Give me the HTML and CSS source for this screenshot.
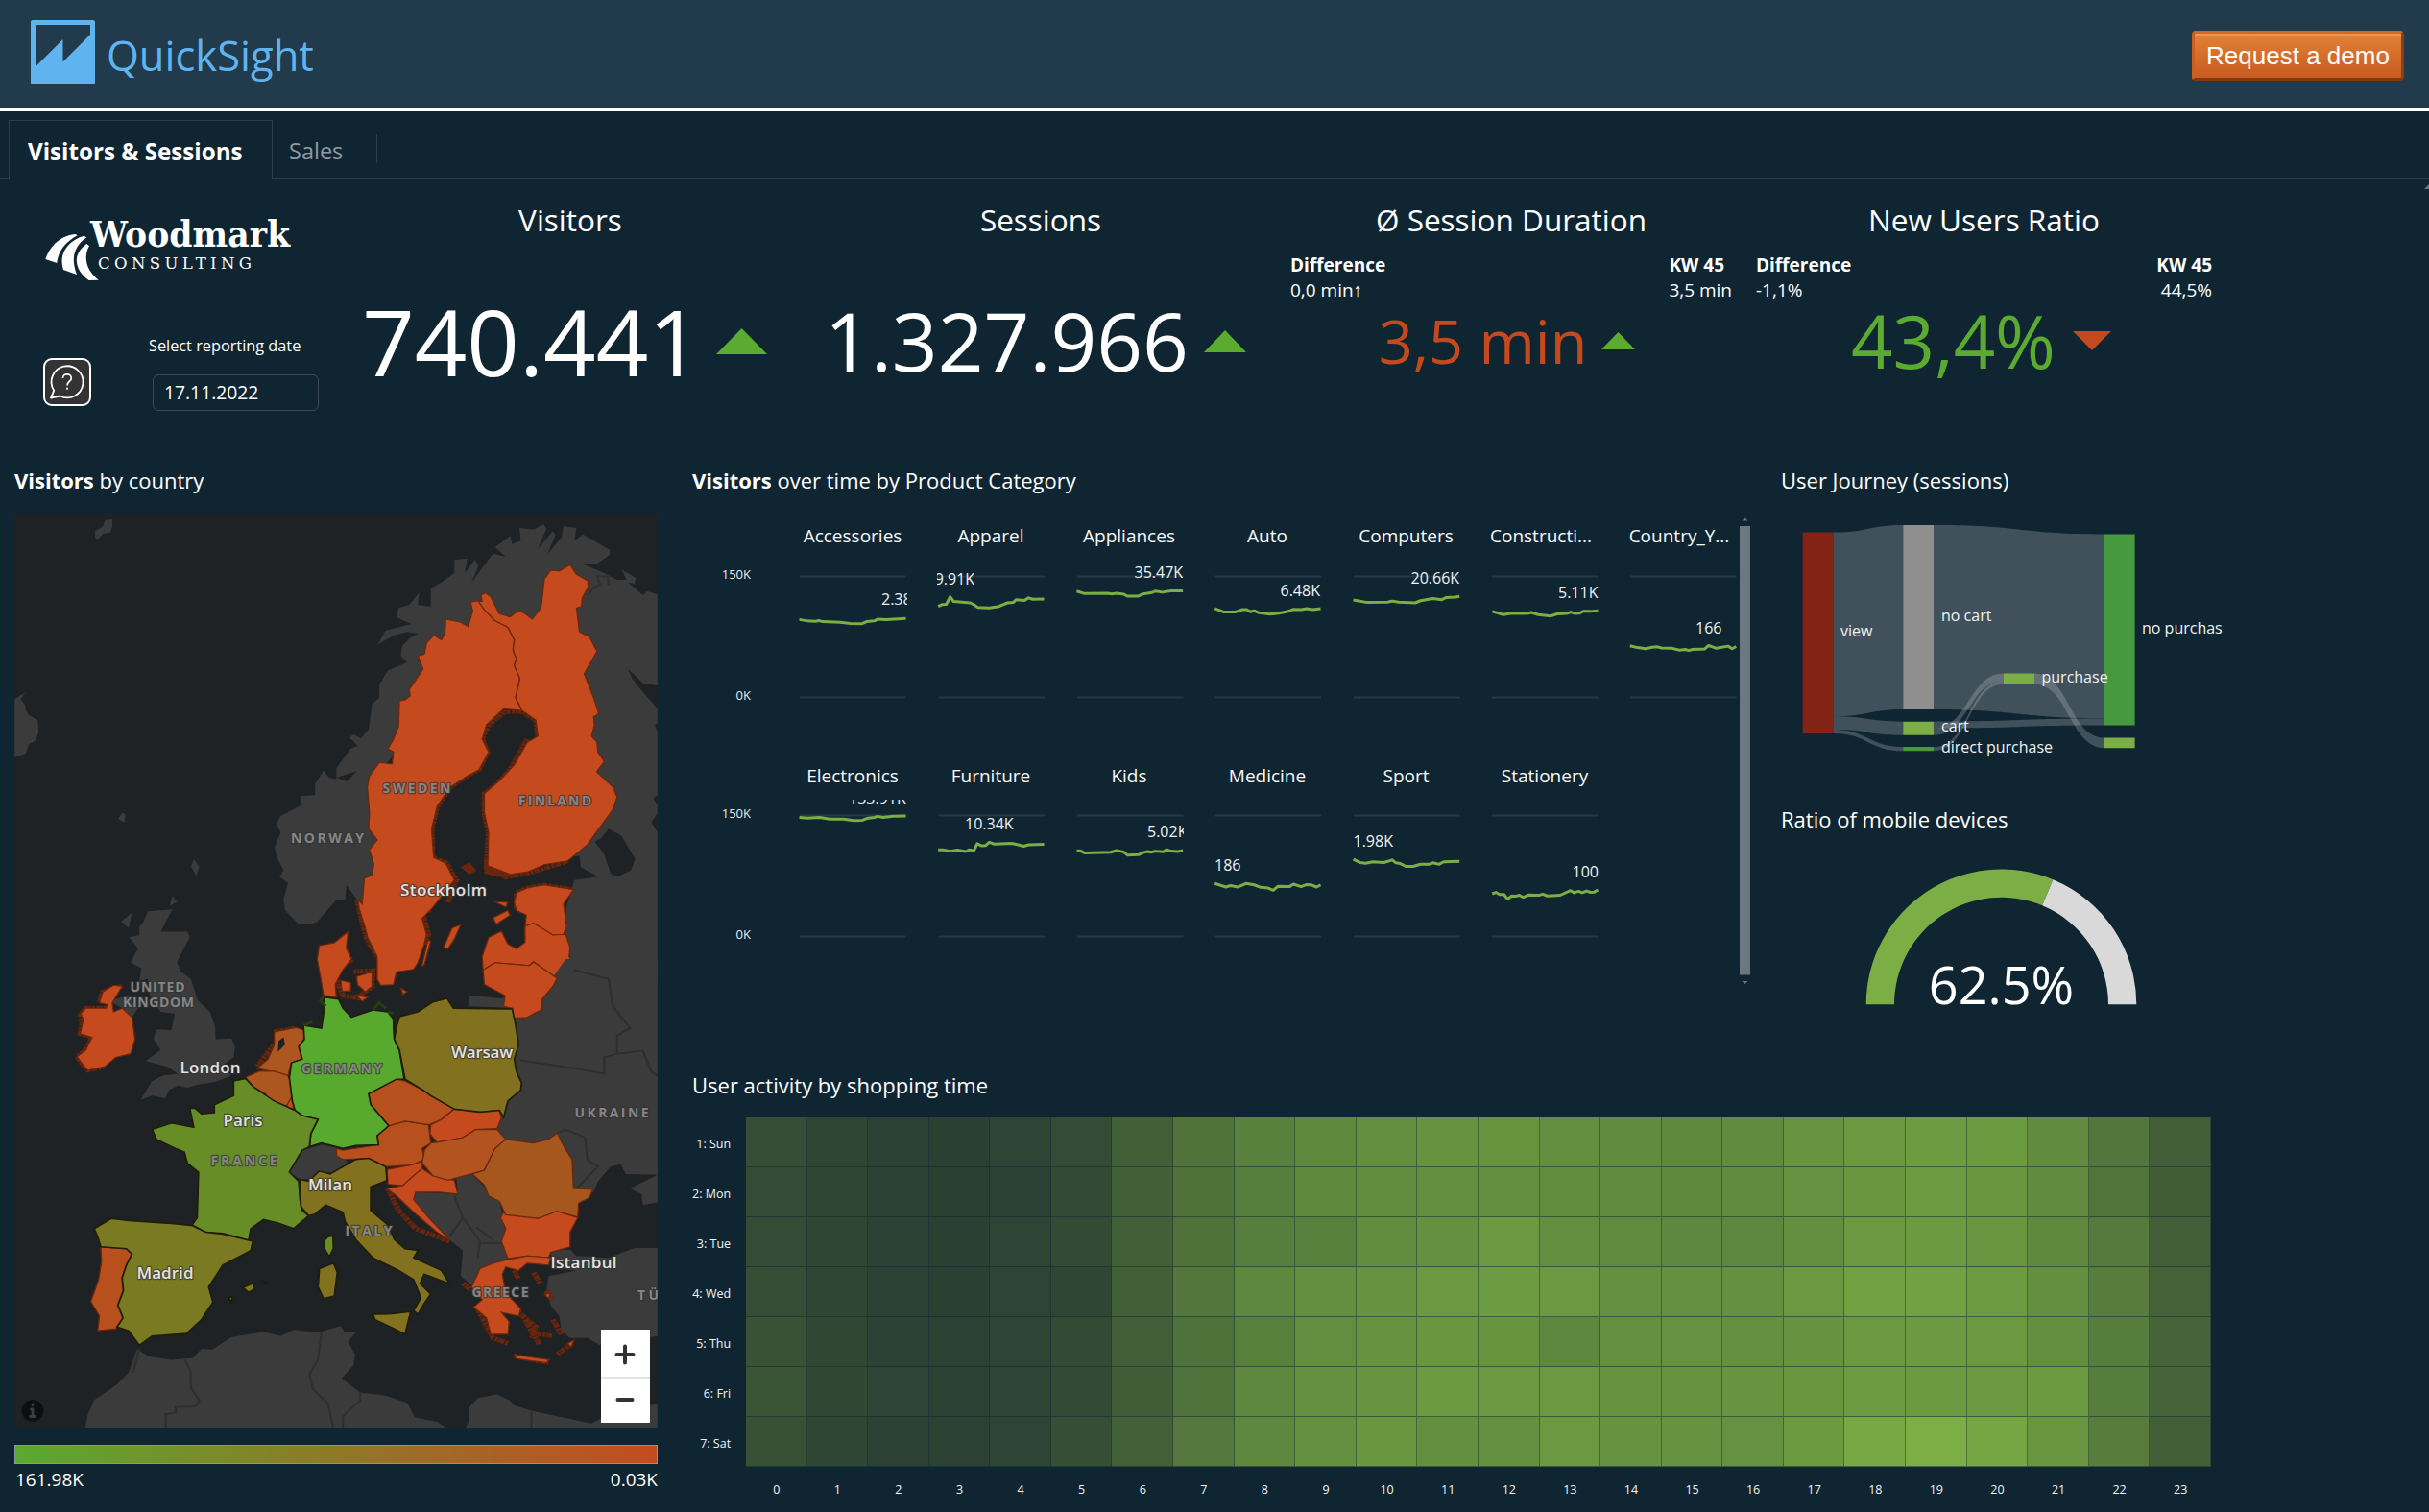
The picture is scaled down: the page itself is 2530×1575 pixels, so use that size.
FILE: index.html
```html
<!DOCTYPE html>
<html lang="en">
<head>
<meta charset="utf-8">
<title>QuickSight – Visitors &amp; Sessions</title>
<link rel="stylesheet" href="styles.css">
</head>
<body>
<header class="topbar">
  <div class="brand">
    <svg class="brand-mark" viewBox="0 0 67 67"><rect width="67" height="67" rx="2" fill="#5fb4f0"/><path d="M5 5H62V15L33.500 43.500V20L5 48.500Z" fill="#213a4c"/></svg>
    <span class="brand-name">QuickSight</span>
  </div>
  <button class="demo-button">Request a demo</button>
</header>
<nav class="tabs">
  <div class="tab tab-active">Visitors &amp; Sessions</div>
  <div class="tab">Sales</div>
  <i class="tab-divider"></i>
  <svg class="page-scroll" viewBox="0 0 5 5"><path d="M0 5L5 0V5Z" fill="#6a7880"/></svg>
</nav>

<section class="kpis">
  <div class="intro">
    <svg class="woodmark" viewBox="45 222 282 74">
      <g transform="translate(30 210) scale(.3333)" fill="#fff">
        <path d="M52 180C66 138 100 106 145 102L152 106C116 126 92 152 88 192Z"/>
        <path d="M172 107L181 112C146 136 128 170 150 228L108 213C92 164 122 122 172 107Z"/>
        <path d="M181 132L189 139C170 172 178 214 218 245L188 246C140 212 136 164 181 132Z"/>
      </g>
      <text x="94" y="257" class="wm-name" textLength="208" lengthAdjust="spacingAndGlyphs">Woodmark</text>
      <text x="102" y="279.500" class="wm-sub" textLength="160">CONSULTING</text>
    </svg>
    <div class="controls">
      <div class="help">
        <svg viewBox="0 0 46 46" fill="none" stroke="#fff" stroke-width="1.800" stroke-linejoin="round"><path d="M9.200 31.800A16.500 16.500 0 1 1 15.500 37.500L6 39.500Z"/><path d="M18.500 19C18.500 13.500 27.300 13.500 27.300 19C27.300 22.300 23 22.300 23 26.500M23 28.800V30.800" stroke-width="1.700"/></svg>
      </div>
      <div class="date">
        <label class="date-label">Select reporting date</label>
        <div class="date-input">17.11.2022</div>
      </div>
    </div>
  </div>
  <div class="kpi">
    <h2>Visitors</h2><div class="deltas"></div>
    <div class="value v1"><span>740.441</span><svg width="53" height="27" viewBox="0 0 53 27"><path d="M26.500 0L53 27H0Z" fill="#5aab2f"/></svg></div>
  </div>
  <div class="kpi">
    <h2>Sessions</h2><div class="deltas"></div>
    <div class="value v2"><span>1.327.966</span><svg width="44" height="23" viewBox="0 0 44 23"><path d="M22 0L44 23H0Z" fill="#5aab2f"/></svg></div>
  </div>
  <div class="kpi">
    <h2>Ø Session Duration</h2>
    <div class="deltas d3"><div><b>Difference</b><br>0,0 min↑</div><div><b>KW 45</b><br>3,5 min</div></div>
    <div class="value v3 bad"><span>3,5 min</span><svg width="35" height="18" viewBox="0 0 35 18"><path d="M17.500 0L35 18H0Z" fill="#5aab2f"/></svg></div>
  </div>
  <div class="kpi kpi-last">
    <h2>New Users Ratio</h2>
    <div class="deltas d4"><div><b>Difference</b><br>-1,1%</div><div class="right"><b>KW 45</b><br>44,5%</div></div>
    <div class="value v4 good"><span>43,4%</span><svg width="40" height="20" viewBox="0 0 40 20"><path d="M0 0H40L20 20Z" fill="#c44a1e"/></svg></div>
  </div>
</section>

<main class="panels">
  <section class="map-panel">
    <h3><b>Visitors</b> by country</h3>
    <div class="map">
      <svg viewBox="15 535 670 953" width="670" height="953">
        <rect x="15" y="535" width="670" height="953" fill="#1e2225"/>
        <g transform="translate(0 480) scale(.44643 .33333)">
          <g class="land">
            <path d="M262 183L245 185 240 205 222 220 222 240 228 245 240 228 257 225 262 205Z"/>
            <path d="M34 745L60 723 48 745 58 762 60 780 68 795 88 810 90 850 82 875 68 885 60 915 34 927Z"/>
            <path d="M285 1100L293 1104 290 1132 276 1118ZM452 1245L465 1268 458 1298 446 1268ZM402 1360L413 1378 396 1392Z"/>
            <path d="M665 1405L661 1370 672 1320 652 1300 662 1280 650 1250 640 1210 655 1160 645 1135 655 1110 690 1085 705 1075 700 1048 735 1045 735 1010 755 968 768 990 785 995 785 960 818 900 835 890 815 865 825 855 842 868 860 840 868 760 885 740 885 700 905 655 950 630 935 610 938 580 955 555 975 540 950 535 920 545 880 575 900 530 960 510 925 490 930 460 955 450 978 412 975 450 1005 455 1005 400 1035 375 1060 350 1060 310 1090 305 1085 350 1108 308 1116 330 1100 380 1150 290 1180 300 1155 270 1190 235 1195 260 1215 250 1212 210 1245 215 1268 198 1275 212 1255 275 1290 220 1296 232 1278 290 1310 240 1315 205 1345 210 1340 250 1360 230 1380 245 1424 280 1422 295 1390 325 1355 320 1400 345 1440 372 1462 372 1450 340 1484 366 1480 385 1465 380 1500 420 1510 408 1534 418V702L1500 695 1465 650 1475 680 1495 715 1534 775V820L1528 825 1534 850V1620H1320V1400L1340 1310 1395 1300 1355 1270 1352 1235 1300 1240 1250 600 1100 600 900 950 900 1300 840 1385 808 1325 806 1370 785 1372 740 1440 725 1449 695 1446Z"/>
          </g>
          <path d="M1420 1150L1450 1172 1482 1245 1472 1280 1440 1300 1425 1290 1410 1230 1388 1190 1402 1180ZM1534 1045L1524 1055 1534 1075ZM1534 1100L1520 1130 1534 1160ZM785 990L832 970 810 1002Z" fill="#1e2225"/>
          <path class="border" d="M1372 420L1385 395 1400 388 1393 360 1418 362 1420 388"/>
          <g class="rough">
            <path d="M833 1370L845 1440 855 1490 880 1550M1005 1405L985 1410 1000 1480 990 1511M1045 1380L1065 1310 1040 1255 1010 1240 1007 1150 1020 1080 1050 1020 1090 985 1118 965 1138 910 1125 870 1140 825 1178 785 1218 785 1250 810 1255 860M1230 870L1190 965 1160 1010 1130 1040 1130 1100 1140 1160 1135 1270 1180 1302 1230 1290 1325 1252M1205 1400V1350L1230 1335 1270 1325 1338 1340"/>
          </g>
          <path d="M1075 1270L1095 1255 1112 1280 1095 1293ZM1130 1290V1245L1180 1265 1210 1300 1160 1300Z" fill="#69260c"/>
          <g class="c-low">
            <path d="M1115 437L1098 442 1103 470 1092 518 1075 505 1040 495 1038 540 1030 560 1012 545 995 570 990 605 975 610 987 650 970 685 955 715 957 735 945 747 932 750 930 830 918 870 905 900 918 910 915 948 885 943 862 985 857 1020 862 1100 860 1150 880 1185 862 1215 872 1260 868 1295 850 1305 845 1385 835 1370 838 1400 850 1450 858 1490 880 1550 880 1620 888 1639 918 1637 925 1597 965 1589 975 1568 990 1511 995 1480 985 1430 1010 1395 1025 1370 1060 1310 1040 1258 1012 1240 1007 1150 1020 1080 1050 1020 1090 985 1118 965 1140 910 1125 870 1135 825 1175 775 1218 780 1203 740 1213 680 1200 640 1205 620 1197 590 1200 560 1185 520 1155 500 1130 465Z"/>
            <path d="M1115 437L1125 440 1122 420 1132 413 1145 425 1165 478 1190 488 1210 468 1225 478 1242 495 1262 460 1265 430 1270 370 1285 342 1305 345 1330 325 1345 355 1372 375 1372 395 1358 430 1357 455 1345 460 1352 535 1375 550 1393 595 1363 665 1385 740 1397 790 1385 800 1387 825 1380 860 1393 880 1395 910 1410 940 1392 972 1430 1020 1440 1050 1430 1090 1370 1200 1325 1250 1270 1262 1230 1285 1190 1292 1138 1265 1140 1160 1130 1100 1130 1040 1165 1000 1200 950 1230 880 1255 860 1250 810 1218 780 1203 740 1213 680 1200 640 1205 620 1197 590 1200 560 1185 520 1155 500 1130 465Z"/>
            <path d="M1205 1350L1230 1335 1270 1325 1338 1340 1315 1385 1322 1455 1315 1480 1290 1482 1265 1462 1245 1445 1225 1455 1228 1420 1205 1405 1200 1380Z"/>
            <path d="M1155 1378L1185 1380 1180 1395ZM1150 1428L1185 1405 1190 1420 1158 1448Z"/>
            <path d="M1225 1455L1245 1445 1290 1482 1320 1480 1330 1520 1328 1550 1338 1580 1325 1608 1300 1617 1265 1585 1245 1565 1235 1577 1155 1568 1127 1591 1125 1550 1140 1490 1170 1470 1185 1510 1205 1525 1225 1505Z"/>
            <path d="M1075 1450L1055 1460 1035 1520 1045 1525 1060 1495ZM1005 1500L998 1500 984 1580 990 1575Z"/>
          </g>
        </g>
        <g transform="translate(0 980) scale(.44643 .37951)">
          <g class="land">
            <path d="M335 -53L345 -81 402 -86 375 -25 437 -25 443 -10 425 30 413 58 420 82 445 105 462 165 490 195 502 235 503 270 540 268 548 290 545 320 515 345 540 370 500 388 460 395 438 403 415 398 395 410 385 432 355 425 328 437 355 385 380 370 415 365 390 345 340 330 375 300 358 270 365 243 400 245 408 200 375 195 350 150 345 105 325 110 330 75 305 60 322 20 300 -10 325 -15 325 -38Z"/>
            <path d="M308 -77L283 -53 300 -35ZM255 165L300 150 322 185 308 210 285 185Z"/>
            <path d="M1320 50H1534V642L1460 640 1448 613 1425 620 1395 660 1385 690 1340 700 1160 560 1160 480 1180 300 1190 184 1092 180 1095 150 1170 158 1290 100Z"/>
            <path d="M1470 680L1534 642V718L1500 725 1497 695Z"/>
            <path d="M1285 850L1330 848 1345 865 1420 870 1480 843 1534 843V1085L1400 1110 1370 1090 1330 1090 1310 1070 1305 1030 1285 1000 1275 960 1280 920 1345 905 1290 900Z"/>
            <path d="M198 1340L205 1300 220 1260 270 1220 300 1185 320 1120 345 1140 400 1150 450 1145 470 1120 495 1122 540 1088 615 1073 655 1085 685 1068 740 1075 795 1057 805 1075 830 1075 812 1100 828 1135 825 1165 797 1200 840 1240 900 1248 950 1268 968 1308 1020 1320 1050 1342H198Z"/>
            <path d="M1085 1342L1095 1315 1095 1280 1115 1255 1160 1245 1190 1262 1200 1275 1240 1290 1380 1325 1420 1300 1534 1270V1342Z"/>
            <path d="M970 690L1068 695 1065 650 1100 640 1165 715 1180 790 1170 825 1185 872 1120 900 1100 945 1075 920 1080 850 1050 822 1000 760 965 710Z"/>
            <path d="M675 635L690 605 705 575 750 560 785 568 785 590 810 605 795 640 765 635 745 655 700 655Z"/>
          </g>
          <path class="border" d="M325 1120L310 1185M430 1150L445 1180 445 1225 465 1262 455 1278 410 1280 410 1295 387 1300V1340M750 1075L742 1150 722 1190 730 1230 765 1270 778 1340M840 1240V1262L800 1305V1340M1240 1290V1340M1340 80L1420 105 1430 180 1470 240 1440 260 1440 310 1410 320 1410 365 1340 350 1215 328M1440 310L1500 302 1520 360 1534 370M1300 528L1320 518 1365 540 1370 600 1395 620 1345 680M1060 700L1080 760 1050 810M1080 760L1120 825 1115 870M1120 830L1170 830M1110 785L1150 820"/>
          <g class="rough">
            <path d="M285 125L240 140 232 170M248 185L200 185 188 205 192 230 187 255 215 265 200 300 180 318 190 335 205 355 245 345M785 110L800 150 850 160M825 85L870 82 868 125 840 150M805 20L820 60M640 250L690 240M600 345L640 285"/>
            <path d="M905 680L930 740 970 790 1050 825M1080 940L1100 960M1110 1000L1150 1090 1185 1105M1190 1000L1250 1060 1240 1090M1290 1040L1310 1080M1275 960L1290 985M1200 905L1210 930M1240 1075L1290 1085M1300 1135L1335 1105M1260 940L1245 910M1225 1040L1260 1110M1200 1140L1280 1158"/>
          </g>
          <g class="c-low">
            <path d="M285 125L265 122 240 140 232 170 250 175 248 185 200 185 188 200 195 215 192 230 187 255 215 265 200 300 180 318 190 335 205 355 245 345 270 320 305 310 315 270 308 210 285 185 265 195 262 170 275 145Z"/>
            <path d="M740 50L745 13 780 5 812 -25 808 20 820 50 800 80 782 120 785 155 755 150 748 100Z"/>
            <path d="M795 108L818 115 818 138 798 138ZM832 98L868 85 868 125 852 140 834 120ZM830 148L858 155 845 166ZM935 130L950 140 940 147Z"/>
            <path d="M1127 80L1155 60 1235 68 1245 58 1300 103 1290 125 1265 160 1262 190 1230 210 1198 212 1195 185 1175 180 1178 150 1130 120Z"/>
            <path d="M672 435L685 435 688 462 665 458Z"/>
            <path d="M1060 462L1120 470 1165 465 1170 485 1160 515 1110 518 1080 540 1020 553 1003 530 1005 505 1030 490Z"/>
            <path d="M903 628L960 615 985 605 985 625 955 655 940 672 905 668Z"/>
            <path d="M955 655L985 625 1010 645 1060 657 1068 695 1025 690 970 690 965 710 1000 760 1050 822 1020 800 970 750 925 700 903 680 940 672Z"/>
            <path d="M1175 745L1255 762 1300 742 1348 760 1330 800 1330 840 1285 855 1280 870 1230 865 1185 872 1170 825 1180 790 1168 760Z"/>
            <path d="M1185 875L1230 865 1285 870 1280 890 1230 885 1210 905 1180 895 1172 915 1180 965 1215 1010 1210 1030 1170 1020 1188 1045 1185 1080 1145 1080 1135 1035 1105 1005 1125 985 1100 950 1120 900 1150 885Z"/>
            <path d="M1200 1135L1240 1143 1282 1150 1275 1158 1205 1147ZM1325 1105L1340 1095 1332 1116ZM1270 970L1285 968 1280 982Z"/>
          </g>
          <g class="c-mid">
            <path fill="#b8501e" d="M235 840L295 845 308 860 295 890 285 925 288 960 275 1000 287 1035 270 1065 228 1070 232 1030 212 990 230 930 237 880Z"/>
            <path fill="#ae561f" d="M640 250L690 238 710 245 708 290 700 300 703 325 680 335 672 370 640 360 600 350 625 325 640 285Z"/>
            <path fill="#ae561f" d="M573 375L605 358 640 358 672 370 682 400 680 430 665 460 640 440 625 435 620 420 590 400Z"/>
            <path fill="#b8501e" d="M785 570L800 575 883 560 880 535 907 508 945 495 1000 505 1005 555 985 570 990 600 960 615 900 620 860 597 800 600 785 590Z"/>
            <path fill="#b8501e" d="M860 420L925 380 945 385 990 412 1060 460 1030 490 1000 505 945 495 907 508 865 450Z"/>
            <path fill="#b3531f" d="M1005 555L1020 553 1080 540 1110 518 1160 518 1180 545 1155 570 1130 630 1100 640 1045 657 1010 645 985 610 990 575Z"/>
            <path fill="#a6571e" d="M1180 545L1245 555 1280 545 1300 528 1318 570 1335 600 1338 680 1383 682 1375 705 1350 720 1348 758 1300 742 1255 762 1180 752 1165 715 1140 700 1130 670 1102 640 1130 630 1155 570Z"/>
          </g>
          <path d="M650 275L662 265 665 285 648 305Z" fill="#1e2225"/>
          <g class="c-high">
            <path fill="#58aa2e" stroke="#23470f" d="M755 155L790 160 800 185 820 210 870 190 905 195 918 215 918 240 920 270 932 300 943 380 925 380 860 420 865 450 907 508 880 535 883 560 830 562 800 570 750 555 722 565 725 530 742 490 705 480 688 465 682 440 675 375 680 335 705 325 697 290 710 270 708 232 750 240 755 200Z"/>
            <path fill="#82711f" d="M932 208L975 195 1010 168 1043 158 1058 185 1195 187 1203 230 1210 285 1200 325 1205 360 1217 390 1215 410 1185 440 1175 485 1165 465 1120 470 1060 462 1005 425 990 412 945 380 932 300 920 270 925 235Z"/>
            <path fill="#678d27" d="M573 378L545 385 545 425 500 450 500 472 470 475 455 460 443 460 452 512 400 500 355 518 365 545 410 570 430 580 437 610 463 635 460 760 448 780 480 800 520 803 580 822 585 790 615 765 650 775 685 790 720 755 705 740 700 710 697 660 675 635 690 605 705 575 722 565 725 530 742 490 705 480 688 465 640 440 590 400ZM765 812L777 810 778 845 768 868 757 845 757 822Z"/>
            <path fill="#7a7a23" d="M220 790L260 762 300 768 390 775 450 782 480 800 520 805 590 825 585 850 520 890 487 950 497 992 470 1040 435 1078 355 1085 325 1110 300 1070 273 1060 287 1035 275 1000 288 960 285 925 295 890 308 860 295 845 235 840 230 820ZM567 952L590 940 595 955 580 965ZM534 978L542 978 540 994ZM612 934L622 938 616 941Z"/>
            <path fill="#82711f" d="M700 655L720 660 745 632 770 640 800 620 830 600 860 597 900 620 903 658 865 675 865 740 905 780 920 820 945 845 975 850 965 870 1030 905 1048 940 1035 935 990 915 980 940 1005 970 990 995 975 1025 965 1015 982 980 965 930 930 905 870 870 830 820 805 770 800 745 760 725 735 750 720 755 702 730ZM870 1025L910 1024 958 1018 945 1080 920 1065 875 1040ZM745 900L778 885 787 910 780 975 755 982 742 950Z"/>
          </g>
          <path d="M755 150L748 165 760 180M870 190L885 170 900 185M905 195L918 200M708 232L730 222" fill="none" stroke="#23470f" stroke-width="7" stroke-dasharray="5 1"/>
        </g>
        <g class="country">
          <text x="434" y="826" textLength="71">SWEDEN</text><text x="578" y="839" textLength="76">FINLAND</text>
          <text x="341" y="878" textLength="76">NORWAY</text><text x="164" y="1033" textLength="57">UNITED</text>
          <text x="165" y="1049" textLength="74">KINGDOM</text><text x="356" y="1118" textLength="84">GERMANY</text>
          <text x="637" y="1164" textLength="77">UKRAINE</text><text x="254" y="1214" textLength="69">FRANCE</text>
          <text x="384" y="1287" textLength="49">ITALY</text><text x="521" y="1351" textLength="59">GREECE</text><text x="675" y="1354" textLength="22">TÜ</text>
        </g>
        <g class="city">
          <text x="462" y="933" textLength="90">Stockholm</text><text x="219" y="1118" textLength="63">London</text>
          <text x="502" y="1102" textLength="64">Warsaw</text><text x="253" y="1173" textLength="41">Paris</text>
          <text x="344" y="1240" textLength="46">Milan</text><text x="172" y="1332" textLength="59">Madrid</text><text x="608" y="1321" textLength="69">Istanbul</text>
        </g>
        <circle cx="34" cy="1469.500" r="11.300" fill="#0c0e0f"/>
        <path d="M34 1463v.5M32.500 1468H34V1475M31.500 1475.500H36.500" fill="none" stroke="#3a3e40" stroke-width="2.800" stroke-linecap="round"/>
      </svg>
      <div class="zoom">
        <svg viewBox="0 0 51 97"><path d="M0 50H51" stroke="#e4e4e4" stroke-width="2"/><path d="M25 17.500V34.500M16.500 26H33.500M17.500 73H32.500" stroke="#333" stroke-width="4" stroke-linecap="round"/></svg>
      </div>
    </div>
    <div class="legend-bar"></div>
    <div class="legend-labels"><span>161.98K</span><span>0.03K</span></div>
  </section>

  <div class="right-area">
    <div class="upper">
      <section class="facets">
        <h3><b>Visitors</b> over time by Product Category</h3>
        <svg viewBox="721 535 1105 495" width="1105" height="495">
          <path class="grid" d="M833 600.500h110.500m34 0h110.500m34 0h110.500m33 0h110.500m34 0h110.500m33.500 0h110.500m33.500 0h110.500M833 726.500h110.500m34 0h110.500m34 0h110.500m33 0h110.500m34 0h110.500m33.500 0h110.500m33.500 0h110.500M833 849.500h110.500m34 0h110.500m34 0h110.500m33 0h110.500m34 0h110.500m33.500 0h110.500M833 975.500h110.500m34 0h110.500m34 0h110.500m33 0h110.500m34 0h110.500m33.500 0h110.500"/>
          <g class="axis-y"><text x="782" y="603">150K</text><text x="782" y="729">0K</text><text x="782" y="852">150K</text><text x="782" y="978">0K</text></g>
          <g class="facet-title">
            <text x="888" y="565">Accessories</text><text x="1032" y="565">Apparel</text><text x="1176" y="565">Appliances</text><text x="1320" y="565">Auto</text><text x="1464.500" y="565">Computers</text><text x="1605" y="565">Constructi...</text><text x="1749" y="565">Country_Y...</text>
            <text x="888" y="815">Electronics</text><text x="1032" y="815">Furniture</text><text x="1176" y="815">Kids</text><text x="1320" y="815">Medicine</text><text x="1464.500" y="815">Sport</text><text x="1609" y="815">Stationery</text>
          </g>
          <clipPath id="plots"><path d="M833 580H945V760H833ZM976 580H1089V760H976ZM1121 580H1234V760H1121ZM1264 580H1820V760H1264ZM833 833H945V1000H833ZM976 832H1089V1000H976ZM1121 832H1233V1000H1121ZM1264 832H1820V1000H1264Z"/></clipPath>
          <g class="point-label" clip-path="url(#plots)">
            <text x="918" y="630">2.38K</text><text x="964.500" y="608.500">19.91K</text><text x="1181.500" y="602">35.47K</text><text x="1333.500" y="620.500">6.48K</text><text x="1469.500" y="608">20.66K</text><text x="1623" y="623">5.11K</text><text x="1766" y="659.500">166</text>
            <text x="884" y="836.500">133.91K</text><text x="1005" y="864">10.34K</text><text x="1195" y="872">5.02K</text><text x="1265" y="907">186</text><text x="1409.500" y="882">1.98K</text><text x="1637.500" y="914">100</text>
          </g>
          <g class="line" transform="translate(700 470) scale(.35714 .37)">
            <path d="M371 474L395 478 418 479 428 477 440 480 490 482 520 485 550 486 556 485 567 480 590 478 599 473 625 474 660 472 682 471"/>
            <path d="M776 437L787 432 800 431 811 410 821 423 870 427 880 432 892 440 925 441 950 438 978 427 995 426 1004 418 1028 420 1040 413 1052 417 1085 416"/>
            <path d="M1180 394L1203 401 1270 400 1283 402 1296 400 1318 403 1328 408 1360 408 1374 402 1400 398 1409 394 1430 397 1455 393 1490 393"/>
            <path d="M371 1031L395 1033 430 1031 460 1036 500 1036 530 1040 555 1039 568 1034 590 1031 600 1028 615 1031 645 1028 682 1027"/>
            <path d="M776 1122L790 1122 811 1126 833 1123 856 1127 867 1122 880 1125 890 1105 903 1111 915 1110 925 1101 940 1106 990 1104 1010 1108 1025 1112 1040 1108 1085 1107"/>
            <path d="M1180 1125L1193 1126 1203 1131 1280 1129 1296 1124 1316 1128 1328 1137 1360 1136 1374 1130 1388 1127 1397 1129 1409 1126 1432 1128 1443 1122 1455 1126 1475 1127 1490 1124"/>
          </g>
          <g class="line" transform="translate(1250 470) scale(.3827 .37)">
            <path d="M40 443L65 453 95 453 115 446 127 446 137 452 147 449 160 455 190 459 215 456 243 450 254 445 275 446 290 443 306 446 328 443"/>
            <path d="M417 419L455 426 510 425 523 422 540 425 585 427 600 421 633 415 658 418 670 412 695 411 706 409"/>
            <path d="M795 451L825 460 845 457 890 457 902 454 920 460 955 464 972 458 998 457 1009 453 1020 457 1033 456 1042 451 1063 451 1083 449"/>
            <path d="M1170 548L1190 553 1213 556 1230 552 1245 551 1255 554 1285 555 1305 560 1320 558 1330 561 1340 558 1373 557 1384 547 1405 555 1437 549 1448 556 1459 550"/>
            <path d="M40 1217L70 1227 83 1223 103 1227 125 1217 147 1221 165 1228 185 1230 199 1236 212 1225 243 1226 254 1219 275 1226 290 1220 303 1221 317 1227 328 1221"/>
            <path d="M417 1149L435 1158 450 1160 470 1156 500 1158 523 1151 533 1159 545 1161 560 1169 580 1169 600 1163 623 1163 633 1159 650 1163 663 1156 706 1155"/>
            <path d="M795 1246L805 1242 815 1248 827 1248 837 1261 848 1252 858 1253 869 1250 880 1256 895 1249 922 1250 933 1247 945 1252 980 1250 1008 1237 1018 1243 1030 1239 1040 1243 1052 1238 1063 1242 1073 1241 1083 1235"/>
          </g>
          <path d="M1812 548H1823V1015.500H1812Z" fill="#6a7880"/>
          <path d="M1814.500 542.500L1817.500 539.500 1820.500 542.500ZM1814.500 1022L1817.500 1025 1820.500 1022Z" fill="#6a7880"/>
        </svg>
      </section>
      <div class="side">
        <section>
          <h3>User Journey (sessions)</h3>
          <svg viewBox="1855 535 459.500 303" width="459.500" height="303">
            <g transform="translate(1830 470) scale(.3333 .3827)">
              <g fill="#c8c8cd" fill-opacity=".27">
                <path d="M238 221C348 221 348 201 458 201V703C348 703 348 722 238 722Z"/>
                <path d="M552 201C820 201 820 226 1086 226V727C820 727 820 703 552 703Z"/>
                <path d="M238 722C348 722 348 736 458 736V773C348 773 348 758 238 758Z"/>
                <path d="M238 758C348 758 348 805 458 805V816C348 816 348 768 238 768Z"/>
                <path d="M552 736C820 736 820 728 1086 728V746C820 746 820 754 552 754Z"/>
                <path d="M552 754C662 754 662 605 771 605V625C662 625 662 773 552 773Z"/>
                <path d="M552 805C662 805 662 625 771 625V634C662 634 662 816 552 816Z"/>
                <path d="M866 605C976 605 976 780 1086 780V808C976 808 976 634 866 634Z"/>
              </g>
              <path d="M143 221H238V768H143Z" fill="#832315"/>
              <path d="M457 201H552V703H457Z" fill="#8f8f8f"/>
              <path d="M457 736H552V773H457ZM771 605H867V634H771ZM1086 780H1181V808H1086Z" fill="#7bae44"/>
              <path d="M457 805H552V816H457ZM1086 226H1181V746H1086Z" fill="#479940"/>
            </g>
            <g class="node-label"><text x="1917" y="663">view</text><text x="2022" y="647">no cart</text><text x="2022" y="762">cart</text><text x="2022" y="784">direct purchase</text><text x="2126.500" y="711">purchase</text><text x="2231" y="660">no purchase</text></g>
          </svg>
        </section>
        <section>
          <h3>Ratio of mobile devices</h3>
          <svg viewBox="1855 868 459 200" width="459" height="200">
            <path d="M1943.700 1046.300A140.800 140.800 0 0 1 2138.400 916.200L2127.200 943.300A111.500 111.500 0 0 0 1973 1046.300Z" fill="#7bae44"/>
            <path d="M2138.400 916.200A140.800 140.800 0 0 1 2225.300 1046.300H2196A111.500 111.500 0 0 0 2127.200 943.300Z" fill="#d9d9d9"/>
            <text x="2084.500" y="1046" class="gauge-value">62.5%</text>
          </svg>
        </section>
      </div>
    </div>
    <section class="activity">
      <h3>User activity by shopping time</h3>
      <div class="heat">
        <div class="days"><span>1: Sun</span><span>2: Mon</span><span>3: Tue</span><span>4: Wed</span><span>5: Thu</span><span>6: Fri</span><span>7: Sat</span></div>
        <div class="cells" id="cells"></div>
        <div class="hours" id="hours"></div>
      </div>
    </section>
  </div>
</main>
<script src="heatmap.js"></script>
</body>
</html>
```
FILE: styles.css
```css
* { box-sizing: border-box; }
body {
  margin: 0;
  width: 2530px;
  height: 1575px;
  overflow: hidden;
  background: #0f2532;
  color: #fff;
  font-family: "Open Sans", "Noto Sans", sans-serif;
}
svg { display: block; }
h2, h3 { margin: 0; font-weight: 400; }
text { font-family: "Open Sans", "Noto Sans", sans-serif; }

.topbar {
  height: 116px;
  padding: 0 26px 0 32px;
  display: flex;
  justify-content: space-between;
  background: #213a4c;
  border-bottom: 3px solid #fff;
}
.brand { display: flex; gap: 12px; padding-top: 21px; }
.brand-mark { width: 67px; height: 67px; }
.brand-name { font-size: 43.500px; line-height: 73px; color: #5fb4f0; }
.demo-button {
  width: 221px;
  height: 52px;
  margin-top: 32px;
  padding: 0;
  border: 3px solid;
  border-color: #d2691f #8a3f14 #7f3a12 #cc5e1f;
  border-radius: 4px;
  background: linear-gradient(#e28236, #c95a20);
  box-shadow: inset 0 2px 0 #e8985a;
  color: #fff;
  font: 26px "Liberation Sans", sans-serif;
}

.tabs {
  height: 70px;
  padding-top: 9px;
  display: flex;
  position: relative;
}
.tabs::before { content: ""; width: 9px; border-bottom: 1px solid #2d3f4c; }
.tabs::after { content: ""; flex: 1; border-bottom: 1px solid #2d3f4c; }
.tab {
  padding: 0 16px 0 17px;
  font-size: 23.500px;
  line-height: 64px;
  color: #8f9aa1;
  border-bottom: 1px solid #2d3f4c;
  width: 108px;
}
.tab-active {
  width: 275px;
  padding: 0 0 0 19px;
  font-size: 24.200px;
  line-height: 63px;
  font-weight: 700;
  color: #fff;
  border: 1px solid #2d3f4c;
  border-bottom: 0;
}
.tab-divider { width: 1px; background: linear-gradient(#2d3f4c, #2d3f4c) 0 15px / 1px 30px no-repeat; border-bottom: 1px solid #2d3f4c; }
.page-scroll { position: absolute; right: 0; top: 76px; width: 5px; height: 5px; }

.kpis {
  height: 299px;
  display: grid;
  grid-template-columns: 349px repeat(4, 490px);
}
.intro { padding: 36px 0 0 45px; }
.woodmark { width: 282px; height: 74px; }
.wm-name { font: 700 38px "DejaVu Serif", serif; fill: #fff; }
.wm-sub { font: 16.500px "DejaVu Serif", serif; fill: #fff; }
.controls { display: flex; padding-top: 51px; }
.help {
  width: 50px;
  height: 50px;
  margin-top: 26px;
  border: 2px solid #fff;
  border-radius: 9px;
  background: #333;
}
.date { padding-left: 60px; }
.date-label { display: block; font-size: 16.300px; line-height: 26px; }
.date-input {
  width: 173px;
  height: 38px;
  margin: 17px 0 0 4px;
  padding-left: 11px;
  border: 1px solid #3a4b57;
  border-radius: 6px;
  font-size: 19.300px;
  line-height: 36px;
}
.kpi {
  padding-top: 23px;
  display: grid;
  grid-template-rows: 40px 66px 80px;
  align-content: start;
  text-align: center;
}
.kpi h2 { font-size: 31.500px; line-height: 40px; }
.kpi-last h2 { padding-left: 5px; }
.deltas { display: flex; justify-content: space-between; padding-top: 14px; text-align: left; font-size: 19px; line-height: 26px; }
.d3 { padding-left: 15px; padding-right: 15px; }
.d4 { padding-left: 10px; padding-right: 5px; }
.right { text-align: right; }
.value { display: flex; justify-content: center; align-items: center; padding-right: 10px; line-height: 80px; }
.v1 { font-size: 95.500px; gap: 16px; padding-right: 12px; }
.v2 { font-size: 83.700px; gap: 16px; padding-right: 11px; }
.v3 { font-size: 63px; gap: 15px; padding-right: 9px; }
.v4 { font-size: 76px; gap: 18px; padding-right: 1px; }
.bad { color: #c44a1e; }
.good { color: #5aab2f; }

.panels { display: flex; gap: 36px; padding-left: 15px; }
h3 { font-size: 22px; line-height: 30px; }
.map-panel { width: 670px; }
.map { position: relative; margin-top: 20px; }
.zoom {
  position: absolute;
  right: 8px;
  bottom: 6px;
  width: 51px;
  height: 97px;
  background: #fff;
}
.land path { fill: #3a3b3a; }
.border { fill: none; stroke: #2e2f2e; stroke-width: 5; }
.rough { fill: none; stroke: #69260c; stroke-width: 13; stroke-dasharray: 7 2 4 1 9 3; }
.c-low path { fill: #c54b1f; stroke: #6b270c; stroke-width: 3; }
.c-mid path { stroke: #6b270c; stroke-width: 3; }
.c-high path { stroke: #201d08; stroke-width: 4; }
.country text, .city text { text-anchor: middle; paint-order: stroke; stroke: #333; stroke-width: 2.500px; stroke-opacity: .7; stroke-linejoin: round; }
.country text { font-size: 14px; font-weight: 700; fill: #858585; }
.city text { font-size: 17px; font-weight: 600; fill: #e2e2e2; }
.legend-bar {
  height: 20px;
  margin-top: 17px;
  border: 1px solid #8a969c;
  background: linear-gradient(90deg, #58aa2e, #8a7d28 45%, #c54b1f);
}
.legend-labels { display: flex; justify-content: space-between; padding: 3px 0 0 1px; font-size: 19px; line-height: 26px; }

.upper { display: flex; gap: 29px; height: 630px; }
.facets svg, .side section:first-child svg { margin-top: 20px; }
.grid { fill: none; stroke: #273845; stroke-width: 2; }
.axis-y text { font-size: 13px; fill: #e8eaec; text-anchor: end; }
.facet-title text { font-size: 19px; fill: #fafafa; text-anchor: middle; }
.point-label text { font-size: 16px; fill: #f0f2f3; }
.line path { fill: none; stroke: #7bae44; stroke-width: 3; stroke-linejoin: round; vector-effect: non-scaling-stroke; }
.node-label text { font-size: 16px; fill: #f0f2f3; }
.gauge-value { font-size: 54px; fill: #fff; text-anchor: middle; }

.heat {
  margin-top: 19px;
  display: grid;
  grid-template-columns: 56px 1526px;
  grid-template-rows: 364px 40px;
}
.days { display: grid; grid-template-rows: repeat(7, 52px); justify-items: end; padding-right: 16px; font-size: 12.500px; line-height: 55px; white-space: nowrap; }
.cells { display: grid; grid-template: repeat(7, 1fr) / repeat(24, 1fr); }
.cells i { border-right: 1px solid rgba(15, 37, 50, .42); border-bottom: 1px solid rgba(15, 37, 50, .5); background-clip: border-box; }
.hours { grid-column: 2; display: grid; grid-template-columns: repeat(24, 1fr); text-align: center; font-size: 12.500px; line-height: 47px; }
.days, .hours { color: #f2f4f5; }
```
FILE: heatmap.js
```js
// Relative activity (0-100) per weekday and hour
const activity = [
  [14,7,3,1,5,12,30,47,59,67,71,75,77,71,69,67,69,76,80,83,82,69,50,29],
  [12,7,2,1,3,11,30,46,57,67,70,72,72,70,69,67,69,74,79,83,79,69,48,28],
  [12,7,3,1,5,11,30,46,57,58,70,73,80,71,68,65,65,72,80,82,78,67,54,29],
  [14,7,3,1,5,7,30,50,65,72,75,80,83,80,73,73,73,80,88,88,83,72,55,32],
  [18,8,4,3,5,11,29,46,58,71,75,79,77,66,73,74,73,75,80,81,80,72,56,34],
  [20,8,5,2,5,11,28,47,66,73,76,82,80,80,75,75,76,79,83,82,80,82,56,34],
  [17,7,4,3,5,14,31,51,65,73,79,72,73,80,75,75,74,82,94,100,93,78,55,30]
];
const low = [42, 62, 51];
const high = [123, 174, 68];
const cells = document.getElementById('cells');
for (const row of activity) {
  for (const v of row) {
    const cell = document.createElement('i');
    const rgb = low.map((c, k) => Math.round(c + (high[k] - c) * v / 100));
    cell.style.backgroundColor = `rgb(${rgb})`;
    cells.append(cell);
  }
}
const hours = document.getElementById('hours');
for (let h = 0; h < 24; h++) {
  const label = document.createElement('span');
  label.textContent = h;
  hours.append(label);
}
```
